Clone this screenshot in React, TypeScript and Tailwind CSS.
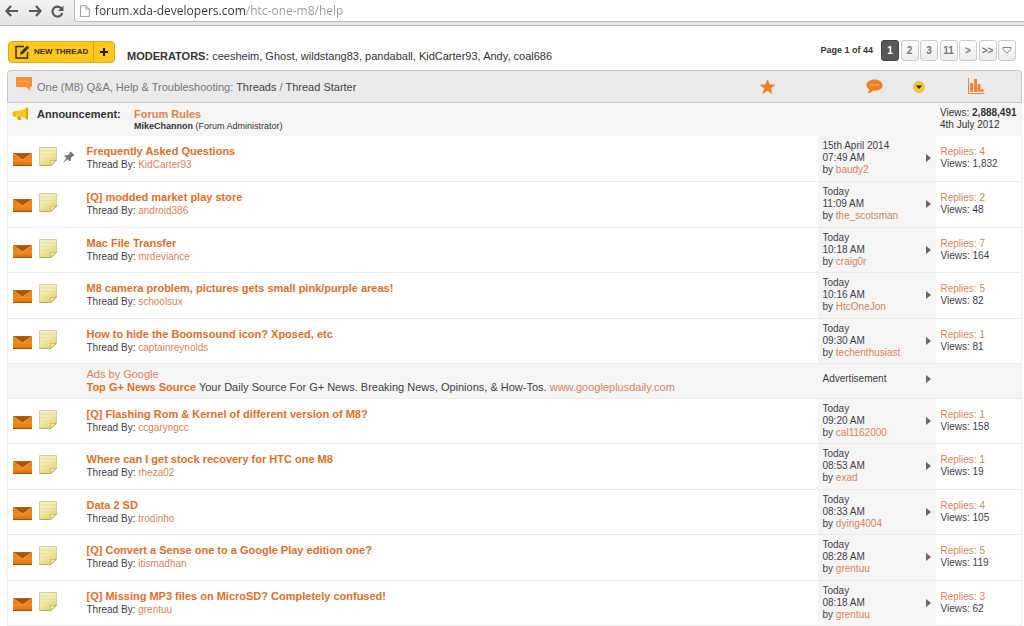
import { useState } from "react";

interface ThreadI {
    title: string;
    author: string;
    date: string;
    time: string;
    lastPoster: string;
    replies: number;
    views: string;
    sticky?: boolean;
}

const moderators = ["ceesheim", "Ghost", "wildstang83", "pandaball", "KidCarter93", "Andy", "coal686"];

const threads: ThreadI[] = [
    { title: "Frequently Asked Questions", author: "KidCarter93", date: "15th April 2014", time: "07:49 AM", lastPoster: "baudy2", replies: 4, views: "1,832", sticky: true },
    { title: "[Q] modded market play store", author: "android386", date: "Today", time: "11:09 AM", lastPoster: "the_scotsman", replies: 2, views: "48" },
    { title: "Mac File Transfer", author: "mrdeviance", date: "Today", time: "10:18 AM", lastPoster: "craig0r", replies: 7, views: "164" },
    { title: "M8 camera problem, pictures gets small pink/purple areas!", author: "schoolsux", date: "Today", time: "10:16 AM", lastPoster: "HtcOneJon", replies: 5, views: "82" },
    { title: "How to hide the Boomsound icon? Xposed, etc", author: "captainreynolds", date: "Today", time: "09:30 AM", lastPoster: "techenthusiast", replies: 1, views: "81" },
    { title: "[Q] Flashing Rom & Kernel of different version of M8?", author: "ccgaryngcc", date: "Today", time: "09:20 AM", lastPoster: "cal1162000", replies: 1, views: "158" },
    { title: "Where can I get stock recovery for HTC one M8", author: "rheza02", date: "Today", time: "08:53 AM", lastPoster: "exad", replies: 1, views: "19" },
    { title: "Data 2 SD", author: "trodinho", date: "Today", time: "08:33 AM", lastPoster: "dying4004", replies: 4, views: "105" },
    { title: "[Q] Convert a Sense one to a Google Play edition one?", author: "itismadhan", date: "Today", time: "08:28 AM", lastPoster: "grentuu", replies: 5, views: "119" },
    { title: "[Q] Missing MP3 files on MicroSD? Completely confused!", author: "grentuu", date: "Today", time: "08:18 AM", lastPoster: "grentuu", replies: 3, views: "62" },
];

function EnvelopeIcon() {
    return (
        <svg width="19" height="13" viewBox="0 0 19 13" className="shrink-0">
            <defs>
                <linearGradient id="envelope" x1="0" y1="0" x2="0" y2="1">
                    <stop offset="0" stopColor="#d97a1c" />
                    <stop offset="0.6" stopColor="#f08a20" />
                    <stop offset="1" stopColor="#d9700f" />
                </linearGradient>
            </defs>
            <rect x="0" y="0" width="19" height="12.500" rx="0.5" fill="url(#envelope)" />
            <path d="M0.500 0.300H18.500L9.500 6.500Z" fill="#a8560f" />
            <path d="M0.500 1L9.500 7L18.500 1" fill="none" stroke="#f6a445" strokeWidth="0.8" />
            <path d="M0 12.500H19" stroke="#a9510a" />
        </svg>
    )
}

function NoteIcon() {
    return (
        <svg width="18" height="20" viewBox="0 0 18 20" className="shrink-0">
            <defs>
                <linearGradient id="note" x1="0" y1="0" x2="0.600" y2="1">
                    <stop offset="0" stopColor="#f4f0cf" />
                    <stop offset="0.5" stopColor="#f3ecb0" />
                    <stop offset="1" stopColor="#e2d368" />
                </linearGradient>
            </defs>
            <path d="M0.500 0.500H17.500V13L12 18.500H0.500Z" fill="url(#note)" stroke="#d6cfa6" />
            <path d="M1 4H17M1 7.500H17M1 11H17" stroke="#e0d898" strokeWidth="0.6" />
            <path d="M0.500 18.500H12L17.500 13" fill="none" stroke="#b3a765" />
            <path d="M11.500 18.500C12.500 17 12.200 15 11 13.500C13.500 14.200 16 14 17.500 13Z" fill="#fbf8d4" stroke="#b8aa50" strokeWidth="0.7" />
        </svg>
    )
}

function PinIcon() {
    return (
        <svg width="12" height="12" viewBox="0 0 12 12" className="shrink-0">
            <path d="M7.500 0.500L11.600 4.300L10.600 5.200L9.800 4.900L7.700 7.200L7.900 9.600L7 10.400L4.800 8.300L0.600 11.500L0.400 11.300L3.500 7L1.300 4.900L2.100 4L4.700 4.200L6.900 2.200L6.600 1.400Z" fill="#757575" />
        </svg>
    )
}

function MegaphoneIcon() {
    return (
        <svg width="17" height="14" viewBox="0 0 17 14" className="shrink-0">
            <path d="M0.500 5L4 4V9.500L2 9.800L0.500 8.500Z" fill="#e9b80c" />
            <path d="M4 4C8 4 12 2.500 15 0.500V12.300C12 10.200 8 9.300 4 9.500Z" fill="#f6ca1b" />
            <path d="M14 1.200L16 0.300V12.700L14 11.700Z" fill="#dba507" />
            <path d="M4.500 9.500H8.500L9.300 13H6.200Z" fill="#dfa80a" />
        </svg>
    )
}

function BrowserBar() {
    const [url, setUrl] = useState<string>("forum.xda-developers.com/htc-one-m8/help");

    return (
        <header className="flex h-[26px] items-start border-b border-[#b5b5b5] bg-linear-to-b from-[#f3f3f3] to-[#e4e4e4] pl-[5px]">
            <nav className="flex h-[22px] w-[69px] items-center gap-[9px]">
                <button type="button" aria-label="Back">
                    <svg width="14" height="12" viewBox="0 0 14 12" fill="none" stroke="#575757" strokeWidth="2.200"><path d="M6 1L1.500 6L6 11M2 6H13" /></svg>
                </button>
                <button type="button" aria-label="Forward">
                    <svg width="14" height="12" viewBox="0 0 14 12" fill="none" stroke="#575757" strokeWidth="2.200"><path d="M8 1L12.500 6L8 11M12 6H1" /></svg>
                </button>
                <button type="button" aria-label="Reload">
                    <svg width="13" height="13" viewBox="0 0 13 13"><path d="M10.500 3.500A5 5 0 1 0 11.300 8" fill="none" stroke="#575757" strokeWidth="2.200" /><path d="M12.500 0.500V6H7Z" fill="#575757" /></svg>
                </button>
            </nav>
            <label className="flex h-[22px] flex-1 items-center gap-[5px] rounded-bl-sm border-b border-l border-[#b9b9b9] bg-white pl-[5px]">
                <svg width="10" height="12" viewBox="0 0 10 12" fill="#fff" stroke="#9b9b9b"><path d="M0.500 0.500H6L9.500 4V11.500H0.500ZM6 0.500V4H9.500" /></svg>
                <input type="text" aria-label="Address" value={url} onChange={(e) => setUrl(e.target.value)} className="h-5 w-full bg-[linear-gradient(90deg,#333_150px,#999_150px)] bg-clip-text font-['Open_Sans',sans-serif] text-[12px] text-transparent outline-none" />
            </label>
        </header>
    )
}

function Toolbar() {
    return (
        <div className="flex h-11 items-start justify-between pt-[14px] pr-[8px] pl-2">
            <div className="flex">
                <div className="mt-px flex h-[22px] rounded-sm border border-[#e0a91a] bg-[#fdc71f] text-[#3a2e10]">
                    <button type="button" className="flex w-[84px] items-center gap-1 pl-[6px] text-[8px] font-bold whitespace-nowrap">
                        <svg width="15" height="14" viewBox="0 0 15 14" fill="none" stroke="#3a2e10" strokeWidth="1.500"><path d="M9 1.500H1V13H12.500V7" /><path d="M5 9.800L5.700 7L12 0.800L14 2.700L7.800 9Z" fill="#3a2e10" stroke="none" /></svg>
                        NEW THREAD
                    </button>
                    <button type="button" aria-label="New thread options" className="flex w-[21px] items-center justify-center border-l border-[#d9a01a]">
                        <svg width="8" height="8" viewBox="0 0 8 8" stroke="#1f1800" strokeWidth="2"><path d="M4 0V8M0 4H8" /></svg>
                    </button>
                </div>
                <p className="ml-3 pt-[9px] text-[11px] leading-[14px] text-[#333]">
                    <b>MODERATORS:</b>{" "}
                    {moderators.map((name, index) => (
                        <span key={name}><a href="#">{name}</a>{index < moderators.length - 1 && ", "}</span>
                    ))}
                </p>
            </div>
            <nav className="flex items-center text-[10px] font-bold text-[#333]">
                <span className="mr-2 text-[9px]">Page 1 of 44</span>
                <div className="flex w-[135px] justify-between text-[#777]">
                    <button type="button" className="h-[21px] w-[18px] rounded-[3px] border border-[#444] bg-[#595959] text-white">1</button>
                    {["2", "3", "11", ">", ">>"].map((page) => (
                        <button type="button" key={page} className="flex h-[21px] w-[18px] items-center justify-center rounded-[3px] border border-[#ccc] bg-linear-to-b from-white to-[#ebebeb]">{page}</button>
                    ))}
                    <button type="button" aria-label="Go to page" className="flex h-[21px] w-[18px] items-center justify-center rounded-[3px] border border-[#ccc] bg-linear-to-b from-white to-[#ebebeb]">
                        <svg width="10" height="7" viewBox="0 0 10 7" fill="#fff" stroke="#888"><path d="M1 0.500H9V2.500L5 6L1 2.500Z" /></svg>
                    </button>
                </div>
            </nav>
        </div>
    )
}

function ForumHeader() {
    return (
        <div className="flex h-[33px] items-center rounded-t-[4px] border border-[#c8c8c8] bg-[#eaeaea] pl-2">
            <svg width="16" height="15" viewBox="0 0 16 15" className="mb-[4px] shrink-0">
                <path d="M1 0H15Q16 0 16 1V9Q16 10 15 10H14V14L10 10H1Q0 10 0 9V1Q0 0 1 0Z" fill="#fb8f34" />
                <path d="M3 4.500H13" stroke="#fdbb80" strokeDasharray="1.500 1" />
            </svg>
            <h1 className="ml-[5px] flex-1 pt-[2px] text-[11px] text-[#777]">
                One (M8) Q&amp;A, Help &amp; Troubleshooting: <a href="#" className="text-[#444]">Threads</a> / <a href="#" className="text-[#444]">Thread Starter</a>
            </h1>
            <a href="#" aria-label="Rating" className="flex w-[106px] justify-start">
                <svg width="15" height="14" viewBox="0 0 15 14"><path d="M7.500 0L9.500 4.800L14.700 5L10.600 8.200L12 13.500L7.500 10.500L3 13.500L4.400 8.200L0.300 5L5.500 4.800Z" fill="#f07f1b" stroke="#d9782a" strokeWidth="0.5" /></svg>
            </a>
            <a href="#" aria-label="Last post" className="flex w-[47px] justify-start">
                <svg width="17" height="15" viewBox="0 0 17 15"><path d="M8.500 0.500C13 0.500 16.500 3 16.500 6.300C16.500 9.600 13 11.800 8.500 11.800L7 11.700C5.500 13.200 4 14 1.500 14C2.800 12.800 3.300 11.800 3.300 10.500C1.500 9.500 0.500 8 0.500 6.300C0.500 3 4 0.500 8.500 0.500Z" fill="#ef7f20" /><path d="M4 6H14" stroke="#fbb97c" strokeWidth="1.500" strokeDasharray="1.500 1" /></svg>
            </a>
            <a href="#" aria-label="Sort order" className="flex w-[54px] justify-start">
                <svg width="12" height="12" viewBox="0 0 12 12"><circle cx="6" cy="6" r="5.500" fill="#f6c634" stroke="#e0bd63" /><path d="M2.800 4.500H9.200L6 8Z" fill="#33290c" /></svg>
            </a>
            <a href="#" aria-label="Statistics" className="flex w-[54px] justify-start">
                <svg width="18" height="17" viewBox="0 0 18 17"><path d="M1.500 0V15.500H17.500" fill="none" stroke="#d78b50" /><path d="M3 5H6V14H3ZM7 1H10V14H7ZM10.500 6H13.500V14H10.500ZM14 11H16.500V14H14Z" fill="#ef8530" /></svg>
            </a>
        </div>
    )
}

function Announcement() {
    return (
        <div className="flex h-[33px] border-x border-[#eee] bg-[#f5f5f5] pt-1 text-[9px] leading-3 text-[#333]">
            <div className="flex w-[126px] items-start gap-2 pl-1">
                <MegaphoneIcon />
                <b className="text-[11px] leading-[14px]">Announcement:</b>
            </div>
            <div className="flex-1">
                <a href="#" className="block text-[11px] leading-[14px] font-bold text-[#de8147]">Forum Rules</a>
                <p className="leading-[10px]"><b>MikeChannon</b> (Forum Administrator)</p>
            </div>
            <p className="w-[81px] text-[10px] leading-3 whitespace-nowrap">Views: <b>2,888,491</b><br />4th July 2012</p>
        </div>
    )
}

function Arrow() {
    return <svg width="5" height="8" viewBox="0 0 5 8" className="shrink-0"><path d="M0 0L5 4L0 8Z" fill="#666" /></svg>
}

function ThreadRow({ thread }: { thread: ThreadI }) {
    return (
        <tr className="h-[45px] border-b border-[#ececec] even:h-[46px]">
            <td>
                <div className="flex items-center pb-[2px] pl-[5px]">
                    <span className="pt-[5px]"><EnvelopeIcon /></span>
                    <span className="ml-[7px]"><NoteIcon /></span>
                    {thread.sticky && <span className="ml-[6px]"><PinIcon /></span>}
                </div>
            </td>
            <td>
                <a href="#" className="block text-[11px] leading-[14px] font-bold text-[#dd6f2c]">{thread.title}</a>
                <p className="leading-[14px]">Thread By: <a href="#" className="text-[#d9835a]">{thread.author}</a></p>
            </td>
            <td className="bg-[#f5f5f5] pr-[5px] pl-[5px]">
                <div className="flex items-center justify-between">
                    <p className="leading-3 whitespace-nowrap">{thread.date}<br />{thread.time}<br />by <a href="#" className="text-[#d9835a]">{thread.lastPoster}</a></p>
                    <Arrow />
                </div>
            </td>
            <td className="pl-[5px] leading-3">
                <a href="#" className="block text-[#d9835a]">Replies: {thread.replies}</a>
                Views: {thread.views}
            </td>
        </tr>
    )
}

function AdRow() {
    return (
        <tr className="h-[35px] border-b border-[#ececec] bg-[#f5f5f5]">
            <td></td>
            <td className="text-[11px] leading-[13px]">
                <a href="#" className="block text-[#d9835a]">Ads by Google</a>
                <a href="#" className="font-bold text-[#dd6f2c]">Top G+ News Source</a> Your Daily Source For G+ News. Breaking News, Opinions, &amp; How-Tos. <a href="#" className="text-[#d9835a]">www.googleplusdaily.com</a>
            </td>
            <td className="pr-[5px] pl-[5px]">
                <div className="flex items-center justify-between pb-1">Advertisement <Arrow /></div>
            </td>
            <td></td>
        </tr>
    )
}

function App() {
    return (
        <div className="bg-white font-['Liberation_Sans',Arial,sans-serif]">
            <BrowserBar />
            <Toolbar />
            <main className="mr-[2px] ml-[7px]">
                <ForumHeader />
                <Announcement />
                <table className="w-full table-fixed border-collapse border-x border-[#eee] text-[10px] text-[#3d3d4a]">
                    <colgroup>
                        <col className="w-[79px]" />
                        <col />
                        <col className="w-[118px]" />
                        <col className="w-[86px]" />
                    </colgroup>
                    <tbody>
                        {threads.slice(0, 5).map((thread) => <ThreadRow key={thread.title} thread={thread} />)}
                        <AdRow />
                        {threads.slice(5).map((thread) => <ThreadRow key={thread.title} thread={thread} />)}
                    </tbody>
                </table>
            </main>
        </div>
    )
}

export default App;
